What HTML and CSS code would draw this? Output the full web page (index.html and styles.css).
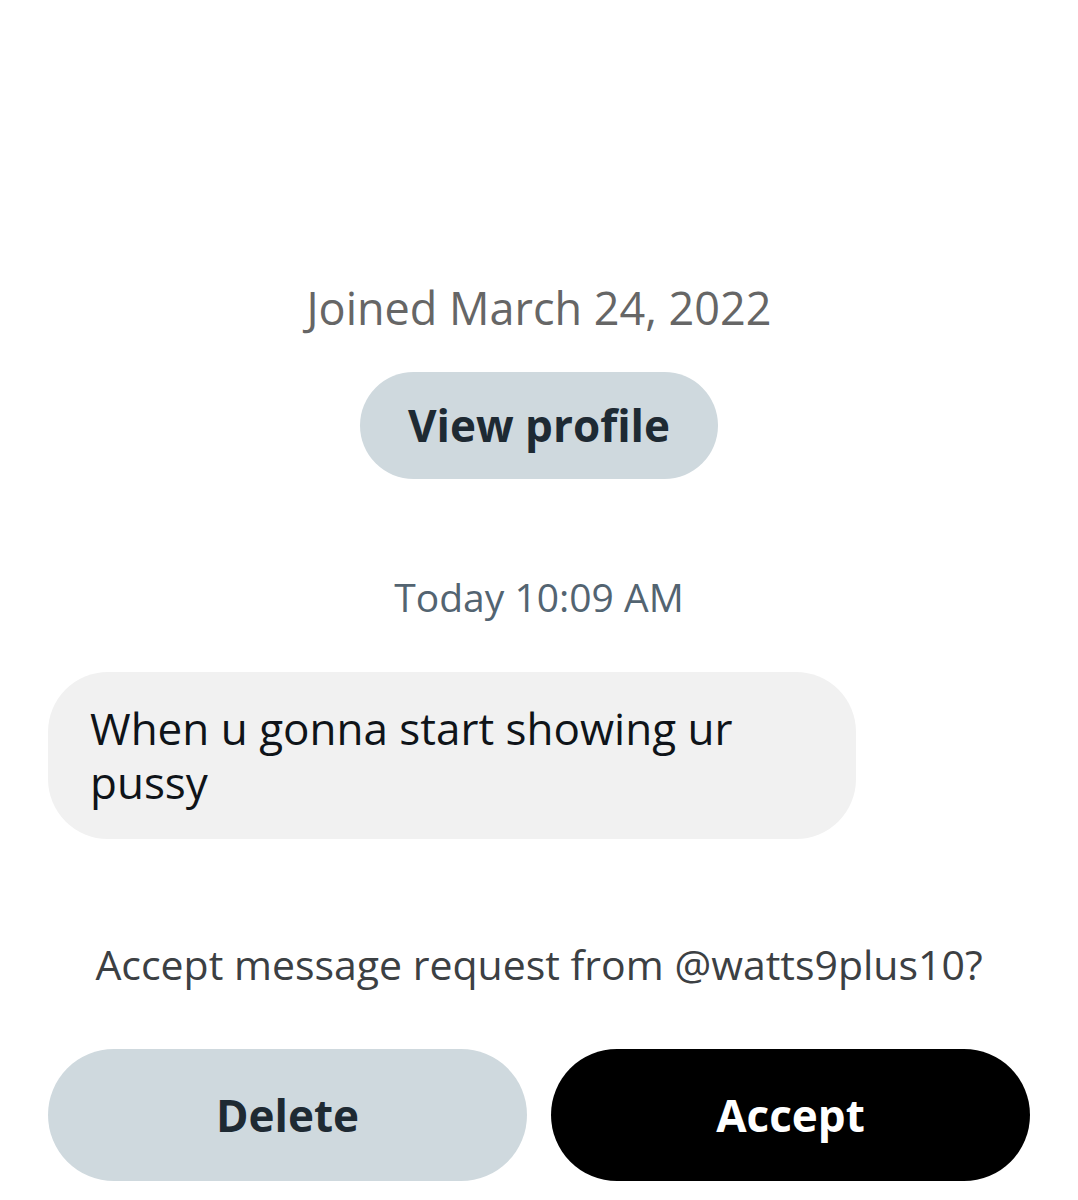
FILE: index.html
```html
<!DOCTYPE html>
<html lang="en">
<head>
    <meta charset="UTF-8">
    <meta name="viewport" content="width=device-width, initial-scale=1.0">
    <title>Message request</title>
    <link rel="stylesheet" href="styles.css">
</head>
<body>
    <main class="conversation">
        <section class="profile">
            <p class="joined">Joined March 24, 2022</p>
            <a href="#" class="btn view-profile">View profile</a>
        </section>

        <section class="messages">
            <p class="timestamp">Today 10:09 AM</p>
            <p class="bubble">When u gonna start showing ur pussy</p>
        </section>

        <footer class="request">
            <p class="request-text">Accept message request from @watts9plus10?</p>
            <div class="actions">
                <button type="button" class="btn">Delete</button>
                <button type="button" class="btn accept">Accept</button>
            </div>
        </footer>
    </main>
</body>
</html>
```

FILE: styles.css
```css
* {
    box-sizing: border-box;
}

body {
    margin: 0;
    background-color: #ffffff;
    color: #0f1419;
    font-family: 'Open Sans', 'Noto Sans', sans-serif;
}

p {
    margin: 0;
}

.conversation {
    display: flex;
    flex-direction: column;
    min-height: 100vh;
    padding: 280px 48px 19px;
}

.profile {
    display: flex;
    flex-direction: column;
    align-items: center;
    gap: 36px;
}

.joined {
    font-size: 45px;
    line-height: 56px;
    color: #666666;
}

.btn {
    border: none;
    border-radius: 66px;
    padding: 38px 48px;
    background-color: #cfd9de;
    color: #1e2a33;
    font-family: inherit;
    font-size: 44px;
    font-weight: bold;
    line-height: 56px;
    text-align: center;
    text-decoration: none;
    cursor: pointer;
}

.view-profile {
    padding: 25px 48px 26px;
}

.messages {
    display: flex;
    flex-direction: column;
    gap: 51px;
    padding-top: 94px;
}

.timestamp {
    font-size: 39px;
    line-height: 48px;
    color: #536471;
    text-align: center;
}

.bubble {
    width: 808px;
    max-width: 100%;
    padding: 29px 42px 30px;
    border-radius: 60px;
    background-color: #f1f1f1;
    font-size: 44px;
    line-height: 54px;
}

.request {
    margin-top: auto;
    text-align: center;
}

.request-text {
    font-size: 41px;
    line-height: 52px;
    color: #3c4043;
}

.actions {
    display: grid;
    grid-template-columns: 1fr 1fr;
    gap: 24px;
    margin-top: 59px;
}

.accept {
    background-color: #000000;
    color: #ffffff;
}
```
